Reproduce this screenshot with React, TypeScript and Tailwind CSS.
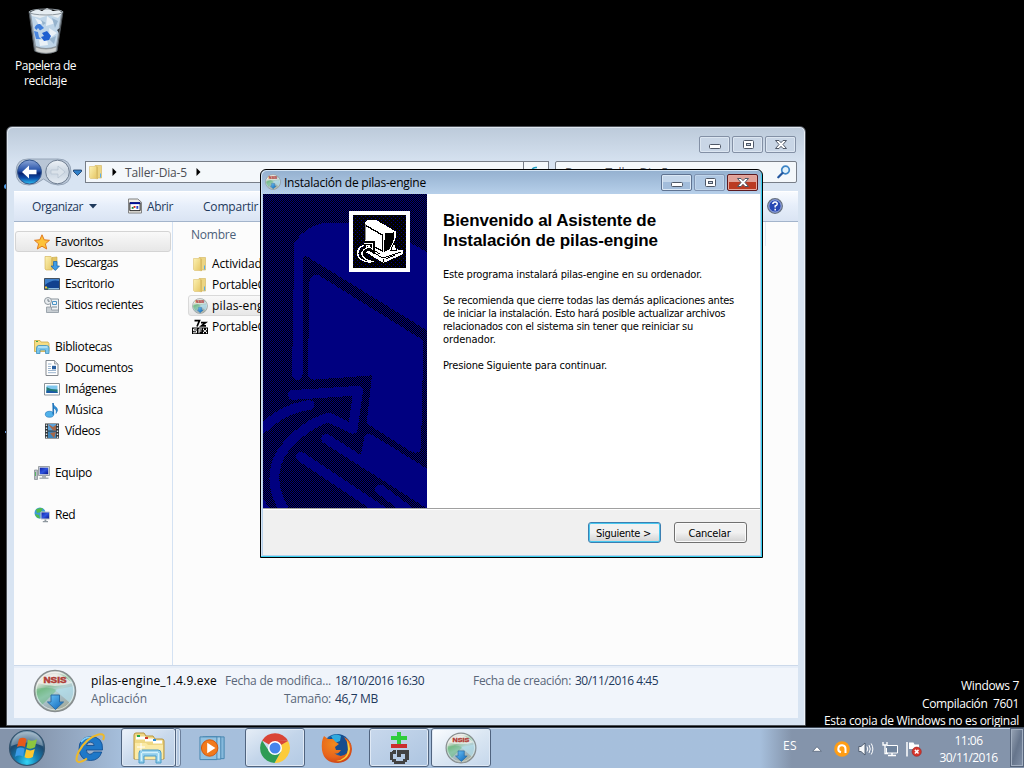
import { useLayoutEffect, useRef, useState, type ReactNode } from "react";

const ui = "font-['Open_Sans','Noto_Sans',sans-serif]";
const tahoma = "font-['DejaVu_Sans_Condensed','DejaVu_Sans',sans-serif]";

/* Single line of text whose letter spacing is set so that it spans `w` pixels. */
function T({ w, c = "", children }: { w: number; c?: string; children: string }) {
  const ref = useRef<HTMLSpanElement>(null);
  const [ls, setLs] = useState(0);
  useLayoutEffect(() => {
    const el = ref.current;
    if (el) setLs((w - el.getBoundingClientRect().width) / children.length);
  }, [w, children]);
  return (
    <span ref={ref} style={{ letterSpacing: ls }} className={`inline-block shrink-0 whitespace-pre ${c}`}>
      {children}
    </span>
  );
}

function Defs() {
  return (
    <svg className="absolute h-0 w-0" aria-hidden="true">
      <defs>
        <linearGradient id="disc" x1="0" y1="0" x2="0.5" y2="1">
          <stop offset="0" stopColor="#ddd6d2" />
          <stop offset="0.28" stopColor="#e4e6e0" />
          <stop offset="0.45" stopColor="#8fc09c" />
          <stop offset="0.6" stopColor="#b4d3d4" />
          <stop offset="0.8" stopColor="#a3b6bd" />
          <stop offset="1" stopColor="#a5ae9f" />
        </linearGradient>
        <linearGradient id="arrow" x1="0" y1="0" x2="1" y2="1">
          <stop offset="0" stopColor="#6cc5f8" />
          <stop offset="1" stopColor="#0b63b8" />
        </linearGradient>
        <linearGradient id="folder" x1="0" y1="0" x2="1" y2="1">
          <stop offset="0" stopColor="#fdf3b4" />
          <stop offset="1" stopColor="#e6c766" />
        </linearGradient>
        <radialGradient id="orb" cx="0.5" cy="0.9" r="0.85">
          <stop offset="0" stopColor="#35d5f5" />
          <stop offset="0.35" stopColor="#1580b5" />
          <stop offset="0.7" stopColor="#1c4a70" />
          <stop offset="1" stopColor="#7e9db4" />
        </radialGradient>
        <linearGradient id="back" x1="0" y1="0" x2="0" y2="1">
          <stop offset="0" stopColor="#8aa5d6" />
          <stop offset="0.45" stopColor="#2350a8" />
          <stop offset="0.55" stopColor="#08226f" />
          <stop offset="0.75" stopColor="#0f4ea8" />
          <stop offset="1" stopColor="#2cc4f6" />
        </linearGradient>
        <linearGradient id="fwd" x1="0" y1="0" x2="0" y2="1">
          <stop offset="0" stopColor="#eef3f8" />
          <stop offset="0.5" stopColor="#c9d4e0" />
          <stop offset="1" stopColor="#e6edf4" />
        </linearGradient>
        <linearGradient id="screen" x1="0" y1="0" x2="1" y2="1">
          <stop offset="0" stopColor="#0b1fa8" />
          <stop offset="0.5" stopColor="#2f55de" />
          <stop offset="1" stopColor="#06128a" />
        </linearGradient>
        <radialGradient id="fox" cx="0.4" cy="0.3" r="0.8">
          <stop offset="0" stopColor="#f08a1e" />
          <stop offset="0.6" stopColor="#e8641b" />
          <stop offset="1" stopColor="#c43a14" />
        </radialGradient>
      </defs>
    </svg>
  );
}

function Nsis({ c }: { c: string }) {
  return (
    <svg viewBox="0 0 44 44" className={`shrink-0 ${c}`}>
      <circle cx="22" cy="22" r="20.5" fill="url(#disc)" stroke="#878d8f" strokeWidth="1.600" />
      <path d="M3 20 Q16 17 24 21 L9 36 Q2 28 3 20Z" fill="#5bb574" opacity=".45" />
      <path d="M22 21 L41 17 Q43 25 37 34Z" fill="#b3e0ee" opacity=".7" />
      <path d="M5 14 Q22 -4 39 14 Q22 20 5 14Z" fill="#f3efec" opacity=".7" />
      <circle cx="22" cy="22" r="18.8" fill="none" stroke="#fff" strokeOpacity=".55" />
      <text x="22" y="14" textAnchor="middle" textLength="23" lengthAdjust="spacingAndGlyphs" fontSize="8.500" fontWeight="bold" fill="#b03b36" stroke="#b03b36" strokeWidth=".5" fontFamily="Liberation Sans, sans-serif">NSIS</text>
      <path d="M18 26 h8.500 v7 h4 L22.500 40.500 L14.500 33 h3.500z" fill="url(#arrow)" stroke="#2a6ba3" />
    </svg>
  );
}

function FolderIcon() {
  return (
    <svg viewBox="0 0 16 16" className="h-4 w-4 shrink-0">
      <path d="M7 1.500 h6.500 v12.500 h-6.500z" fill="#ecd583" stroke="#d2b35a" strokeWidth=".6" />
      <path d="M1.500 2.500 h5 l2-.8 v12.800 h-6 l-1-1z" fill="url(#folder)" stroke="#dcc070" strokeWidth=".6" />
      <path d="M8.500 2 l1.500 1 v12 l-1.500.3z" fill="#d9bd65" />
      <path d="M12 9.500 h1 v4 h-1z" fill="#58aee8" />
    </svg>
  );
}

function Recycle() {
  return (
    <svg viewBox="0 0 38 46" className="h-[46px] w-[38px]">
      <path d="M2 3.500 L7.500 43 Q19 48 30 43 L36 3.500z" fill="#8f9aa4" stroke="#4c5359" />
      <path d="M4 5 L9 38 Q19 42 29 38 L34 5z" fill="#bfd5e8" />
      <path d="M4 4 L10 1 L15 3 L20 0 L26 3 L32 2 L35 5 L31 10 L22 7 L13 10 L5 8z" fill="#e6edf2" />
      <path d="M8 10 L17 14 L12 17z M20 8 L29 15 L19 18z M22 20 L30 25 L23 30z M12 32 L20 31 L21 37 L13 38z" fill="#eaf1f7" />
      <path d="M25 10 l6 3 -3 7z M22 31 l7-3 -2 8z M14 12 l5 3 -3 2z" fill="#96b3cd" />
      <path d="M30 22 l3-2 -1 5z" fill="#2c3238" />
      <path d="M7.500 20 Q9 15.500 13 16 L17 20 L13 22.500 L11 20 L9.500 22z" fill="#3f7ddb" />
      <path d="M7 23 L11 24 L12 29 L14 31 L9 31z" fill="#4a86de" />
      <path d="M15 25 L20 23 L24 28 L22 32 L17 33 L14 29 L17 28z" fill="#1e5fd0" />
      <path d="M8.500 39 Q19 43 29.500 39 L29 43.500 Q19 47 9 43.500z" fill="#cfd2d1" stroke="#7d8386" strokeWidth=".6" />
      <ellipse cx="19" cy="4" rx="17" ry="3" fill="none" stroke="#8f989f" strokeWidth="1" />
    </svg>
  );
}

type Kind = "star" | "down" | "desk" | "recent" | "lib" | "doc" | "pic" | "music" | "video" | "pc" | "net";

const drawings: Record<Kind, ReactNode> = {
  star: <path d="M8 .8 L10.200 5.800 L15.500 6.300 L11.400 9.800 L12.700 15 L8 12.200 L3.300 15 L4.600 9.800 L.5 6.300 L5.800 5.800z" fill="#fdc23a" stroke="#e07a1f" strokeWidth="1" />,
  down: (
    <>
      <path d="M1 1.500 h6 l1 1 v12.500 h-6 l-1-1z" fill="url(#folder)" stroke="#d0ad4e" strokeWidth=".6" />
      <path d="M8 2.500 l5 -.5 v12 h-5z" fill="#e3c566" stroke="#c9a743" strokeWidth=".6" />
      <path d="M9.500 6.500 h3.500 v4.500 h2.500 L11.300 15.500 L7 11 h2.500z" fill="#3e9be6" stroke="#1762ae" strokeWidth=".7" />
    </>
  ),
  desk: (
    <>
      <path d="M.5 2.500 h15 v11 h-15z" fill="#12418e" stroke="#45525f" />
      <path d="M1 9 Q8 3 15 5 V3 H1z" fill="#3f7fc9" />
      <path d="M4 12 h11 v1.500 h-11z" fill="#8ebbe0" />
      <path d="M1 10.500 h2 v2 h-2z" fill="#f4c53d" />
      <path d="M3 11.500 h1.500 v1.500 h-1.500z" fill="#3ea14c" />
    </>
  ),
  recent: (
    <>
      <path d="M6.500 2 h8 v12 h-8z" fill="#eef2f5" stroke="#8a949c" />
      <path d="M8.500 4.500 h4 v3 h-4z" fill="none" stroke="#4b94c6" />
      <path d="M8 10 h5" stroke="#7d8b96" />
      <circle cx="4" cy="4" r="3.500" fill="#e9edf0" stroke="#9199a0" />
      <path d="M4 2 v2.200 h1.800" fill="none" stroke="#56636e" strokeWidth=".8" />
      <path d="M2.500 10 h5 v3 h7 v2.500 h-12z" fill="#c8ced3" stroke="#8c969e" strokeWidth=".8" />
    </>
  ),
  lib: (
    <>
      <path d="M.5 3 V1.500 h5.500 l1 1.500 h7 l1 1.500 v8 h-14.500z" fill="#f6dd83" stroke="#cda846" strokeWidth=".8" />
      <path d="M2 2.500 h2" stroke="#3aa648" />
      <path d="M2.500 14.500 V9 Q2.500 6.500 5 6.500 h7.500 Q15 6.500 15 9 v5.500 h-3.500 v-3.500 h-5.500 v3.500z" fill="#7cc5ea" stroke="#3d90bf" strokeWidth=".8" />
      <path d="M4 8 h9.500" stroke="#c9eefc" strokeWidth="1.200" />
    </>
  ),
  doc: (
    <>
      <path d="M2 .5 h8.500 L14 4 v11.500 h-12z" fill="#fff" stroke="#84898f" />
      <path d="M10.500.5 V4 H14" fill="#d5dadf" stroke="#84898f" strokeWidth=".7" />
      <path d="M4 4 h3.500 M4 6.500 h3 M4 8.500 h3 M4 10.500 h8 M4 12.700 h8" stroke="#9db6cf" />
      <path d="M8 5.800 h4 v3.500 h-4z" fill="#285f9f" />
    </>
  ),
  pic: (
    <>
      <path d="M.5 2.500 h15 v11.500 h-15z" fill="#fff" stroke="#8b949b" />
      <path d="M2.500 4.500 h11 v7.500 h-11z" fill="#7fc7ee" />
      <path d="M2.500 6 Q6 8.500 13.500 8.500 v3.500 h-11z" fill="#217a74" />
      <path d="M2.500 9.500 Q8 9.500 13.500 11 v1 h-11z" fill="#1b5aa7" />
    </>
  ),
  music: (
    <>
      <path d="M8.500 1 Q10 4 12.500 5.500 Q15 8 12 11.500 Q13 7.500 9.700 6 V12.500" fill="#2f8fd6" stroke="#1a6fb5" strokeWidth=".5" />
      <ellipse cx="5.500" cy="12.300" rx="4.200" ry="3" fill="#51b2ea" stroke="#1a6fb5" strokeWidth=".6" />
      <path d="M8.500 1 h1.300 v11.500 h-1.300z" fill="#1a6fb5" />
    </>
  ),
  video: (
    <>
      <path d="M1 .5 h14 v15 h-14z" fill="#30363a" />
      <path d="M4 1 h8 v6.500 h-8z" fill="#5ba1d8" />
      <path d="M4 8.500 h8 v6.500 h-8z" fill="#3e86bb" />
      <path d="M4 1 l5 3 3-2 v5.500 h-3z M6 10 l6-1 -2 6z" fill="#a56748" />
      <path d="M2.500 1.500 v14 M13.500 1.500 v14" stroke="#dfe5e8" strokeWidth="1.400" strokeDasharray="1.500 1.500" />
    </>
  ),
  pc: (
    <>
      <path d="M.5 5 h3 v9.500 h-3z" fill="#b9bfc4" stroke="#7e868c" strokeWidth=".7" />
      <path d="M1.500 7 v4" stroke="#3db04f" strokeWidth=".8" />
      <path d="M4.500 1.500 h11 v9 h-11z" fill="#d5d9dc" stroke="#868e94" strokeWidth=".8" />
      <path d="M5.800 2.700 h8.400 v6.500 h-8.400z" fill="url(#screen)" />
      <path d="M8 10.500 h4 v2 h2.500 v1.500 h-9 v-1.500 h2.500z" fill="#a9b0b5" />
    </>
  ),
  net: (
    <>
      <circle cx="6" cy="6" r="5.500" fill="#3b9bd8" />
      <path d="M2 2.500 Q6 0 9 1.500 L7 5 L3 6z M1 7 l4 1 1 3.500 Q2 11 1 7z M8 4 l3 1 -1 3z" fill="#52bb4c" />
      <path d="M7 5 h8.500 v7 h-8.500z" fill="url(#screen)" stroke="#c2c8cd" strokeWidth="1" />
      <path d="M10.500 12.500 h1.800 v1.500 h1.700 v1.200 h-5.200 v-1.200 h1.700z" fill="#8f989f" />
    </>
  ),
};

const nav: { k: Kind; t: string; w: number; sub?: boolean; gap?: boolean; on?: boolean }[] = [
  { k: "star", t: "Favoritos", w: 48, on: true },
  { k: "down", t: "Descargas", w: 53, sub: true },
  { k: "desk", t: "Escritorio", w: 49, sub: true },
  { k: "recent", t: "Sitios recientes", w: 78, sub: true },
  { k: "lib", t: "Bibliotecas", w: 57, gap: true },
  { k: "doc", t: "Documentos", w: 68, sub: true },
  { k: "pic", t: "Imágenes", w: 51, sub: true },
  { k: "music", t: "Música", w: 38, sub: true },
  { k: "video", t: "Vídeos", w: 35, sub: true },
  { k: "pc", t: "Equipo", w: 37, gap: true },
  { k: "net", t: "Red", w: 20, gap: true },
];

function Glyph({ kind }: { kind: "min" | "max" | "close" }) {
  return (
    <svg viewBox="0 0 14 11" className="h-[11px] w-[14px]">
      {kind === "min" && <rect x="1.500" y="5.500" width="11" height="4" rx="1" fill="#fff" stroke="#4e5766" />}
      {kind === "max" && (
        <>
          <rect x="2.500" y="1.500" width="10" height="8" rx="1" fill="#fff" stroke="#4e5766" />
          <rect x="5.500" y="4.500" width="4" height="2" fill="#c7d3e2" stroke="#4e5766" />
        </>
      )}
      {kind === "close" && (
        <path d="M1.500 1.500 h3.500 l2 2.200 2-2.200 h3.500 l-3.500 4 3.500 4 h-3.500 l-2-2.200 -2 2.200 h-3.500 l3.500-4z" fill="#fff" stroke="#4e5766" strokeLinejoin="round" />
      )}
    </svg>
  );
}

function CaptionButtons({ active }: { active?: boolean }) {
  const base = "flex h-[17px] w-[31px] items-center justify-center rounded-[2px] border";
  const plain = active
    ? "border-[#5f7391] bg-linear-to-b from-[#c4d6ea] from-50% to-[#a3bddb] to-50% shadow-[inset_0_0_0_1px_#dbe8f5]"
    : "border-[#8390a5] bg-[#c9d6e6] shadow-[inset_0_0_0_1px_#dce6f1]";
  const dim = active ? "border-[#8094b2] bg-[#b0c8e3] shadow-[inset_0_0_0_1px_#c0d5ea]" : plain;
  const close = active
    ? "border-[#5c1a20] bg-linear-to-b from-[#e0a198] from-45% to-[#bb3a22] to-50% shadow-[inset_0_0_0_1px_#e8a99f]"
    : plain;
  return (
    <div className="flex gap-[2px]">
      <div className={`${base} ${plain}`}><Glyph kind="min" /></div>
      <div className={`${base} ${dim}`}><Glyph kind="max" /></div>
      <div className={`${base} ${close}`}><Glyph kind="close" /></div>
    </div>
  );
}

function Explorer() {
  return (
    <section className="absolute left-[6px] top-[126px] flex h-[600px] w-[800px] flex-col rounded-t-[6px] border border-[#4b5057] bg-linear-to-b from-[#bccada] to-[#d8e4f2] to-[38px] px-[7px] shadow-[inset_1px_1px_0_#dfe7f0,inset_-1px_0_0_#eef3f9]">
      <div className="flex h-[34px] shrink-0 justify-end pr-[2px] pt-[9px]">
        <CaptionButtons />
      </div>
      <div className="flex h-[22px] shrink-0 items-center">
        <svg viewBox="0 0 70 28" className="-my-[3px] h-[28px] w-[70px] shrink-0">
          <path d="M14 1 H44 Q57 1 57 14 Q57 27 44 27 Q37 27 29.500 21 Q22 27 15 27 Q2 27 2 14 Q2 1 14 1z" fill="#b9c6d6" stroke="#96a5b8" />
          <circle cx="15.500" cy="14" r="12" fill="url(#back)" stroke="#34568c" />
          <path d="M8 14 L15 7.500 V11.800 H22.500 V16.200 H15 V20.500z" fill="#fff" />
          <circle cx="43.500" cy="14" r="11.800" fill="url(#fwd)" stroke="#6d7c90" />
          <path d="M51 14 L44 8 V12 H37 V16 H44 V20z" fill="#dae2ea" stroke="#b5c2d0" strokeWidth=".7" />
          <path d="M59.500 12 H67.500 V13.500 L63.500 17.500 L59.500 13.500z" fill="#2f7fc8" stroke="#17335c" strokeWidth=".8" />
        </svg>
        <div className="ml-px flex h-[22px] w-[464px] items-center border border-[#777e88] bg-[#f4f8fb] pl-[2px]">
          <FolderIcon />
          <svg viewBox="0 0 5 8" className="ml-[8px] h-2 w-[5px]"><path d="M.5 0 L4.500 4 L.5 8z" /></svg>
          <T w={62} c="ml-[8px] text-[#4c4f55]">Taller-Dia-5</T>
          <svg viewBox="0 0 5 8" className="ml-[9px] h-2 w-[5px]"><path d="M.5 0 L4.500 4 L.5 8z" /></svg>
          <div className="ml-auto h-full w-px bg-[#777e88]" />
          <svg viewBox="0 0 24 20" className="h-5 w-6"><path d="M8 8 Q9 5 13 5.500" fill="none" stroke="#1f9fc4" strokeWidth="1.500" /></svg>
        </div>
        <div className="ml-[6px] flex h-[22px] w-[242px] items-center justify-between rounded-[2px] border border-[#777e88] bg-[#f4f8fb] pl-[9px] pr-[5px]">
          <T w={103} c="text-[#5e6268]">Buscar Taller-Dia-5</T>
          <svg viewBox="0 0 14 14" className="h-[14px] w-[14px]">
            <circle cx="8.500" cy="5" r="3.800" fill="#e2f2fb" stroke="#3c85c6" strokeWidth="1.700" />
            <path d="M5.500 8 L1.300 12.300" stroke="#23579f" strokeWidth="2.200" strokeLinecap="round" />
          </svg>
        </div>
      </div>
      <div className="mt-[8px] flex h-[31px] shrink-0 items-center border-b border-[#a3b4cb] bg-linear-to-b from-[#fafcff] from-0% via-[#e6eefa] via-50% to-[#dae4f3] text-[#1e395b] shadow-[inset_0_1px_0_#fff]">
        <T w={51} c="ml-[18px]">Organizar</T>
        <svg viewBox="0 0 8 5" className="ml-[6px] h-[5px] w-2"><path d="M0 0 H8 L4 4.500z" fill="#1e395b" /></svg>
        <svg viewBox="0 0 15 16" className="ml-[31px] h-4 w-[14px]">
          <path d="M.5.5 H10.500 L14.500 4 V15.500 H.5z" fill="#f2f0ea" stroke="#777" />
          <path d="M2 4.500 H13 V13 H2z" fill="#fff" stroke="#111" />
          <path d="M2 4 H13 V6 H2z" fill="#00109a" />
          <path d="M4 9 h2 v2 h-2z" fill="#188638" /><path d="M6 8 h2 v2 h-2z" fill="#d3251d" /><path d="M9 8 h2 v3 h-2z" fill="#2243c8" />
        </svg>
        <T w={26} c="ml-[5px]">Abrir</T>
        <T w={78} c="ml-[30px]">Compartir con</T>
        <svg viewBox="0 0 16 16" className="ml-auto mr-[15px] h-4 w-4">
          <circle cx="8" cy="8" r="7.300" fill="#2848b4" stroke="#68727f" strokeWidth="1.300" />
          <circle cx="8" cy="8" r="6.200" fill="none" stroke="#c5d1ec" strokeWidth=".8" />
          <path d="M5.800 6 Q6 3.900 8.200 4 Q10.500 4.200 10.200 6.200 Q9.900 7.500 8.200 8 V9.500 M8.200 10.800 V12.500" fill="none" stroke="#fff" strokeWidth="1.500" />
        </svg>
      </div>
      <div className="flex h-[443px] shrink-0 bg-[#fcfcfc] text-black">
        <nav className="w-[159px] shrink-0 border-r border-[#d4e2f3] pl-px pt-[9px]">
          {nav.map((n) => (
            <div
              key={n.t}
              className={`flex h-[21px] w-[156px] items-center rounded-[3px] border ${n.on ? "border-[#d4d4d4] bg-linear-to-b from-[#f9f9f9] to-[#e7e7e7]" : "border-transparent"} ${n.gap ? "mt-[21px]" : ""} ${n.sub ? "pl-[28px]" : "pl-[18px]"}`}
            >
              <svg viewBox="0 0 16 16" className="h-4 w-4 shrink-0">{drawings[n.k]}</svg>
              <T w={n.w} c="ml-[5px]">{n.t}</T>
            </div>
          ))}
        </nav>
        <div className="w-[593px] pl-[15px]">
          <div className="flex h-[24px] items-center border-r border-[#e3ebf5] pl-[3px] text-[#4c607a]"><T w={45}>Nombre</T></div>
          <div className="mt-[7px] w-[560px]">
            <div className="flex h-[21px] items-center pl-[4px]"><FolderIcon /><T w={62} c="ml-[4px]">Actividades</T></div>
            <div className="flex h-[21px] items-center pl-[4px]"><FolderIcon /><T w={61} c="ml-[4px]">PortableGit</T></div>
            <div className="flex h-[21px] items-center rounded-[3px] border border-[#d9d9d9] bg-linear-to-b from-[#f9f9f9] to-[#e7e7e7] pl-[3px]">
              <Nsis c="h-4 w-4" /><T w={126} c="ml-[4px]">pilas-engine_1.4.9.exe</T>
            </div>
            <div className="flex h-[21px] items-center pl-[4px]">
              <svg viewBox="0 0 16 16" className="h-4 w-4">
                <path d="M2.500 1.700 h5 L5 7.500 M9 3.700 h4.500 L9.500 6.800 h4.500" fill="none" stroke="#000" strokeWidth="1.700" />
                <path d="M0 8.500 h16 v6.500 h-16z" />
                <path d="M5 10 h-3.500 v1.800 h3 v2 h-3.500 M10 10 h-3 v4.300 M7 12 h2.500 M11.500 9.500 v1.500 l3 2 v1.300 M14.500 9.500 v1.500 l-3 2 v1.300" fill="none" stroke="#fff" />
              </svg>
              <T w={61} c="ml-[4px]">PortableGit</T>
            </div>
          </div>
        </div>
      </div>
      <div className="flex h-[53px] shrink-0 border-t border-[#ccd9ea] bg-[#f1f5fb] pl-[19px] pt-[3px] text-[#1e395b] shadow-[inset_0_2px_0_#e7eef8]">
        <Nsis c="h-[44px] w-[44px]" />
        <div className="ml-[14px] w-[134px] pt-[2px]">
          <div className="flex h-[18px] items-center"><T w={126} c="text-black">pilas-engine_1.4.9.exe</T></div>
          <div className="flex h-[18px] items-center"><T w={56} c="text-[#5a6779]">Aplicación</T></div>
        </div>
        <div className="flex w-[106px] flex-col items-end pt-[2px] text-[#5a6779]">
          <div className="flex h-[18px] items-center"><T w={106}>Fecha de modifica...</T></div>
          <div className="flex h-[18px] items-center"><T w={47}>Tamaño:</T></div>
        </div>
        <div className="ml-[4px] w-[138px] pt-[2px]">
          <div className="flex h-[18px] items-center"><T w={89}>18/10/2016 16:30</T></div>
          <div className="flex h-[18px] items-center"><T w={43}>46,7 MB</T></div>
        </div>
        <div className="mt-[2px] flex h-[18px] items-center">
          <T w={98} c="text-[#5a6779]">Fecha de creación:</T>
          <T w={83} c="ml-[4px]">30/11/2016 4:45</T>
        </div>
      </div>
    </section>
  );
}

/* Side banner: dithered navy backdrop with the enlarged computer outline and the boxed icon. */
function Banner() {
  return (
    <svg viewBox="0 0 164 314" shapeRendering="crispEdges" className="h-[314px] w-[164px] shrink-0">
      <defs>
        <pattern id="dither" width="2" height="2" patternUnits="userSpaceOnUse">
          <rect width="2" height="2" fill="#000080" />
          <rect width="1" height="1" fill="#000" />
          <rect x="1" y="1" width="1" height="1" fill="#000" />
        </pattern>
        <pattern id="dots" width="4" height="4" patternUnits="userSpaceOnUse">
          <rect width="4" height="4" fill="#000" />
          <rect width="1" height="1" fill="#000080" />
          <rect x="2" y="2" width="1" height="1" fill="#000080" />
        </pattern>
      </defs>
      <rect width="164" height="314" fill="url(#dither)" />
      <g transform="scale(.33333) translate(-9 -12)">
        <g fill="#000080">
          <path d="M103 160 Q130 115 180 101 L210 98 L340 98 L501 186 V421 L135 196 L130 205 L128 555 Q112 585 96 555z" />
          <path d="M148 275 Q150 254 175 255 L480 445 Q490 450 490 465 L483 775 Q478 793 455 786 L325 703 Q320 699 321 690 L336 556 L160 569 Q145 569 144 548z" />
          <path d="M313 740 Q322 726 337 735 L501 836 V943 L302 795z" />
        </g>
        <g fill="none" stroke="#000080" strokeWidth="29" strokeLinecap="round" strokeLinejoin="round">
          <path d="M98 615 L295 602 L278 717 L208 683 Q135 700 70 780 Q15 860 72 960" />
          <path d="M149 645 Q70 655 5 718" />
          <path d="M198 746 L520 950" />
          <path d="M122 800 L370 965" />
          <path d="M360 898 L450 965" />
          <path d="M0 940 L20 965" />
        </g>
      </g>
      <rect x="86" y="17" width="61" height="61" fill="#fff" />
      <rect x="90" y="21" width="53" height="53" fill="url(#dots)" />
      <g transform="scale(.33333) translate(-9 -12)">
        <g fill="#fff">
          <path d="M314 98 L322 91 L350 91 L407 124 V143 L400 165 L412 178 L428 181 V193 L370 219 L312 183 L318 171 L314 155z" />
          <path d="M375 130 L403 127 V145 L389 178 L377 184 L371 185z" fill="#000" />
          <path d="M402 158 L411 180 L392 182z" fill="#fff" stroke="#000" strokeWidth="3" />
        </g>
        <g fill="none">
          <path d="M319 107 L368 136 V184 L341 170" stroke="#000" strokeWidth="4" />
          <path d="M317 103 V150" stroke="#8a8a8a" strokeWidth="3" />
          <path d="M326 180 L369 204 L424 186 M340 180 L360 192 M371 207 V216 M378 207 L405 195" stroke="#000" strokeWidth="3" />
          <path d="M313 160 H338 V181 L328 174 Q308 181 307 195 Q310 211 341 215" stroke="#000" strokeWidth="13" />
          <path d="M313 160 H338 V178 L328 170 Q308 177 305 192 Q310 211 341 215 M311 165 Q288 177 295 199 Q306 217 334 216" stroke="#fff" strokeWidth="4" />
        </g>
      </g>
    </svg>
  );
}

function Wizard() {
  return (
    <section className="absolute left-[260px] top-[169px] flex h-[389px] w-[503px] flex-col rounded-t-[6px] border border-black bg-linear-to-b from-[#94b0cf] to-[#b8d1eb] to-[25px] pl-[2px] pr-px shadow-[inset_-1px_-1px_0_#38d0f0,inset_1px_1px_0_#d3e4f4]">
      <header className="flex h-[24px] shrink-0 items-center pl-[2px] pr-[3px]">
        <Nsis c="h-4 w-4" />
        <T w={142} c="ml-[3px] text-black">Instalación de pilas-engine</T>
        <div className="ml-auto"><CaptionButtons active /></div>
      </header>
      <div className="mr-px flex h-[361px] shrink-0 flex-col bg-[#f0f0f0]">
        <div className="flex h-[314px] bg-white">
          <Banner />
          <div className={`pl-[16px] pt-[17px] text-[11px] leading-[13px] text-black ${tahoma}`}>
            <h1 className="flex flex-col font-['Liberation_Sans',Arial,sans-serif] text-[17px] font-bold leading-[20px]">
              <T w={213} c="self-start">Bienvenido al Asistente de</T>
              <T w={215} c="self-start">Instalación de pilas-engine</T>
            </h1>
            <div className="mt-[17px] flex flex-col items-start">
              <T w={259}>Este programa instalará pilas-engine en su ordenador.</T>
              <T w={291} c="mt-[13px]">Se recomienda que cierre todas las demás aplicaciones antes</T>
              <T w={282}>de iniciar la instalación. Esto hará posible actualizar archivos</T>
              <T w={250}>relacionados con el sistema sin tener que reiniciar su</T>
              <T w={53}>ordenador.</T>
              <T w={164} c="mt-[13px]">Presione Siguiente para continuar.</T>
            </div>
          </div>
        </div>
        <footer className={`flex flex-1 justify-end gap-[13px] border-t border-[#a0a0a0] pr-[13px] pt-[13px] text-[11px] text-black shadow-[inset_0_1px_0_#fff] ${tahoma}`}>
          <button className="flex h-[21px] w-[73px] items-center justify-center rounded-[3px] border border-[#3c7fb1] bg-linear-to-b from-[#f1f1f1] from-50% to-[#d2d2d2] pr-[2px] pt-px shadow-[inset_0_0_0_1px_#48c8f0]">
            <T w={55}>{"Siguiente >"}</T>
          </button>
          <button className="flex h-[21px] w-[73px] items-center justify-center rounded-[3px] border border-[#707070] bg-linear-to-b from-[#f1f1f1] from-50% to-[#d2d2d2] pr-[2px] pt-px shadow-[inset_0_0_0_1px_#fafafa]">
            <T w={42}>Cancelar</T>
          </button>
        </footer>
      </div>
    </section>
  );
}

const taskBtn = "flex h-[39px] shrink-0 items-center justify-center rounded-[3px] border border-[#50647f] shadow-[inset_0_0_0_1px_#dfe9f5]";

function Taskbar() {
  return (
    <footer className="absolute left-0 top-[727px] flex h-[41px] w-[1024px] border-t border-[#3c4654] bg-linear-to-r from-[#8494ab] from-[3%] via-[#a6bfdc] via-[12%] to-[#a6bfdc] to-[70%] shadow-[inset_0_1px_0_#c5d5e8]">
      <svg viewBox="0 0 38 38" className="ml-[8px] mt-[1px] h-[38px] w-[38px] shrink-0">
        <circle cx="19" cy="19" r="17.500" fill="url(#orb)" stroke="#33536e" strokeWidth="1.200" />
        <path d="M3 17 Q5 3 19 3 Q33 3 35 17 Q19 10 3 17z" fill="#fff" opacity=".3" />
        <path d="M11 10 Q14.500 7.500 18.500 10 L17 18 Q13 15.800 9 18z" fill="#e65a1c" />
        <path d="M20 10.500 Q24 13 29 10.300 L27 18.300 Q22.500 21 18.500 18.700z" fill="#8cc63f" />
        <path d="M8.700 19.700 Q12.500 17.300 16.600 19.700 L15 27.500 Q11 25.300 7 27.800z" fill="#3b9be8" />
        <path d="M18.200 20.300 Q22.300 22.700 26.800 20 L24.800 28 Q20.500 30.600 16.500 28.200z" fill="#fcc730" />
      </svg>
      <svg viewBox="0 0 30 32" className="ml-[29px] mt-[4px] h-[32px] w-[30px] shrink-0">
        <path d="M26 20 H18.500 Q17.500 22.300 14.800 22.300 Q11.500 22 11.300 18 H27.500 Q28.500 4.500 15 4.500 Q4 5.500 4 17 Q5 28.500 15.500 28.500 Q24 28.500 26.800 20z M11.500 13.500 Q12 10.200 15.300 10.200 Q19 10.200 19.200 13.500z" fill="#1f78c8" fillRule="evenodd" stroke="#104a8c" strokeWidth=".8" />
        <path d="M6 10 Q10 4.500 17 5.500" fill="none" stroke="#83cdf5" strokeWidth="1.600" />
        <path d="M28 8 Q31 1 23.500 2.500 Q11 6 3.500 20 Q-1 30 4.500 30 Q8 29.500 12 26.500" fill="none" stroke="#edb92c" strokeWidth="2" />
      </svg>
      <div className="ml-[16px] flex shrink-0">
        <div className={`${taskBtn} z-10 w-[55px] bg-linear-to-br from-[#edf3fa] via-[#c9d9ec] to-[#b8cde5]`}>
          <svg viewBox="0 0 34 32" className="h-8 w-[34px]">
            <path d="M2 27 V3 Q2 1 4 1 H12 L14 4 H21 L23 7 H30 Q32 7 32 9 V27z" fill="#eed784" stroke="#b8953f" />
            <path d="M4 6 H13 M13 8 H22 M21 10 H30" stroke="#fff" strokeWidth="3" />
            <path d="M5 3 h3 v2 h-3z" fill="#21a84a" /><path d="M13 5 h3 v2 h-3z" fill="#cf3a2a" /><path d="M21 7 h3 v2 h-3z" fill="#2c8ed6" />
            <path d="M3 11 H14 L16 13 H31 V27 H3z" fill="#fbeaa6" />
            <path d="M7 31 V21 Q7 18 10 18 H26 Q29 18 29 21 V31 H24 V24 H12 V31z" fill="#90cdec" stroke="#4a9bc5" />
            <path d="M10 20.500 H26 M9.500 21 V29 M26.500 21 V29" stroke="#d2f1fc" strokeWidth="1.500" />
            <path d="M9 11 V19 M5 15 H13" stroke="#fff" />
          </svg>
        </div>
        <div className="-ml-px h-[39px] w-[6px] rounded-r-[3px] border border-[#6c809c] bg-[#b2c7e0] shadow-[inset_0_0_0_1px_#d7e3f1]" />
      </div>
      <svg viewBox="0 0 30 26" className="ml-[18px] mt-[7px] h-[26px] w-[29px] shrink-0">
        <path d="M7 1.500 H26 V24 H7z" fill="#86b9dc" stroke="#4786b0" />
        <path d="M4 1.500 H22.500 V24.500 H4z" fill="#a5cfe9" stroke="#4786b0" />
        <path d="M1 1.500 H18.500 V25 H1z" fill="#91c2e2" stroke="#4786b0" />
        <circle cx="11" cy="13" r="8.500" fill="#f17a1c" stroke="#d2560c" />
        <path d="M8.500 7.500 L17 13 L8.500 18.500z" fill="#fff" />
      </svg>
      <div className={`${taskBtn} ml-[17px] w-[60px] bg-linear-to-br from-[#e6eef7] via-[#c3d5ea] to-[#b3cae4]`}>
        <svg viewBox="0 0 30 30" className="h-[30px] w-[30px]">
          <path d="M15 15 L2.100 7.500 A15 15 0 0 1 28 7.800 L15 8z" fill="#d94436" />
          <path d="M15 15 L28 7.800 A15 15 0 0 1 14.500 30 L21 18z" fill="#fccb3a" />
          <path d="M15 15 L21 18.500 L14.500 30 A15 15 0 0 1 2.100 7.500 L9 18z" fill="#2e9c55" />
          <path d="M15 8 H28 L21 12z" fill="#d94436" />
          <circle cx="15" cy="15" r="7" fill="#fff" /><circle cx="15" cy="15" r="5.500" fill="#4584ec" />
        </svg>
      </div>
      <svg viewBox="0 0 32 32" className="ml-[16px] mt-[4px] h-8 w-8 shrink-0">
        <circle cx="16" cy="16" r="14" fill="#1b5fa4" />
        <path d="M8 7 Q13 1 21 3 Q30 7 30 16 Q29 25 22 26 Q15 22 8 7z" fill="#164d8e" />
        <path d="M10 4 Q16 1 20 4 L19 9 L14 11z" fill="#2faade" />
        <path d="M3 4 L7 7 L12 7 Q14 10 18 12 L14 15 L15 18 L20 18 Q17 23 13 21 Q20 27 26 21 Q28 15 26 10 L23 5 Q31 9 31 17 Q30 30 17 31 Q3 31 1 18 Q0 9 3 4z" fill="url(#fox)" />
        <path d="M26 8 Q32 17 26 25 Q21 30 15 29 Q26 27 27 18z" fill="#f8ca3b" />
      </svg>
      <div className={`${taskBtn} ml-[16px] w-[60px] bg-linear-to-br from-[#c8d8ec] to-[#adc5e1]`}>
        <svg viewBox="0 0 20 32" shapeRendering="crispEdges" className="h-8 w-5">
          <path d="M8 0 h4 v4 h6 v4 h-6 v4 h-4 v-4 h-6 v-4 h6z" fill="#2fcc3c" />
          <path d="M2 12 h16 v4 h-16z" fill="#cb2d2d" />
          <path d="M4 18 h3 v4 h-3 v5 h3 v2 h7 v-2 h2 v-5 h-4 v3 h-4 v-7 h12 v10 h-2 v2 h-2 v2 h-11 v-2 h-2 v-2 h-2 v-8 h2z" fill="#424242" />
        </svg>
      </div>
      <div className={`${taskBtn} ml-[2px] w-[60px] bg-linear-to-br from-[#fbfdff] via-[#dbe7f3] to-[#c5d7eb]`}>
        <Nsis c="h-[32px] w-[32px]" />
      </div>
      <div className="ml-auto flex h-full w-[264px] shrink-0 bg-linear-to-r from-[#a6bfdc] to-[#8494ab] to-[12%] text-white shadow-[inset_0_1px_0_#c5d5e8]">
        <T w={14} c="ml-[23px] mt-[10px]">ES</T>
        <svg viewBox="0 0 10 6" className="ml-[15px] mt-[18px] h-[6px] w-[10px]"><path d="M5 .7 L9.300 5.300 H.7z" fill="#fff" stroke="#58667b" strokeWidth=".8" /></svg>
        <svg viewBox="0 0 16 16" className="ml-[12px] mt-[13px] h-4 w-4">
          <circle cx="8" cy="8" r="7.800" fill="#ff9d14" />
          <path d="M7 11.300 A3.600 3.600 0 1 1 11.500 8 V12" fill="none" stroke="#fff" strokeWidth="2" />
        </svg>
        <svg viewBox="0 0 16 16" className="ml-[8px] mt-[13px] h-4 w-4">
          <path d="M.8 5.500 H3 L7 2 V14 L3 10.500 H.8z" fill="#f6f8fa" stroke="#3f4d60" strokeWidth=".8" />
          <path d="M9 5.500 Q10.500 8 9 10.500 M11 4 Q13.500 8 11 12 M13.200 2.500 Q16.500 8 13.200 13.500" fill="none" stroke="#fff" />
        </svg>
        <svg viewBox="0 0 16 16" className="ml-[8px] mt-[13px] h-4 w-4">
          <path d="M5 4.500 H15.500 V12 H4.500 V7" fill="#70849d" stroke="#fff" />
          <path d="M1 1 V4 H5 V1 M3 4 V12.500 H6" fill="none" stroke="#fff" strokeWidth="1.300" />
          <path d="M6 14.500 H14 M10 12 V15" stroke="#fff" strokeWidth="1.500" />
        </svg>
        <svg viewBox="0 0 16 16" className="ml-[8px] mt-[13px] h-4 w-4">
          <path d="M1 1 V15.500" stroke="#fff" strokeWidth="1.500" />
          <path d="M3 1.500 H7.500 L8.500 3.500 H13 V9.500 H8 L7 8 H3z" fill="#fff" />
          <circle cx="10.700" cy="10.700" r="4.600" fill="#d7362c" stroke="#9c201b" strokeWidth=".6" />
          <path d="M8.900 8.900 l3.600 3.600 M12.500 8.900 l-3.600 3.600" stroke="#fff" strokeWidth="1.500" />
        </svg>
        <div className="ml-[17px] flex w-[59px] flex-col items-center pt-[4px] leading-[17px]">
          <T w={28}>11:06</T>
          <T w={58}>30/11/2016</T>
        </div>
        <div className="ml-auto h-[39px] w-[14px] border border-[#56647a] bg-linear-to-br from-[#9aa6b7] via-[#66758c] to-[#8190a7] shadow-[inset_0_0_0_1px_#a2afc1]" />
      </div>
    </footer>
  );
}

export default function App() {
  return (
    <main className={`relative h-[768px] w-[1024px] overflow-hidden bg-black text-[12px] leading-[15px] ${ui}`}>
      <Defs />
      <div className="absolute left-[4px] top-[8px] flex w-[83px] flex-col items-center text-white">
        <Recycle />
        <T w={61} c="mt-[4px]">Papelera de</T>
        <T w={43}>reciclaje</T>
      </div>
      <div className="absolute left-[4px] top-[184px] h-[5px] w-[5px] rounded-full bg-[#4d9be6]" />
      <div className="absolute left-[5px] top-[431px] h-[2px] w-[2px] bg-[#5c8fd0]" />
      <div className="absolute right-[5px] top-[677px] flex flex-col items-end leading-[18px] text-white">
        <T w={58}>Windows 7</T>
        <T w={97}>Compilación  7601</T>
        <T w={195} c="leading-[15px]">Esta copia de Windows no es original</T>
      </div>
      <Explorer />
      <Wizard />
      <Taskbar />
    </main>
  );
}
